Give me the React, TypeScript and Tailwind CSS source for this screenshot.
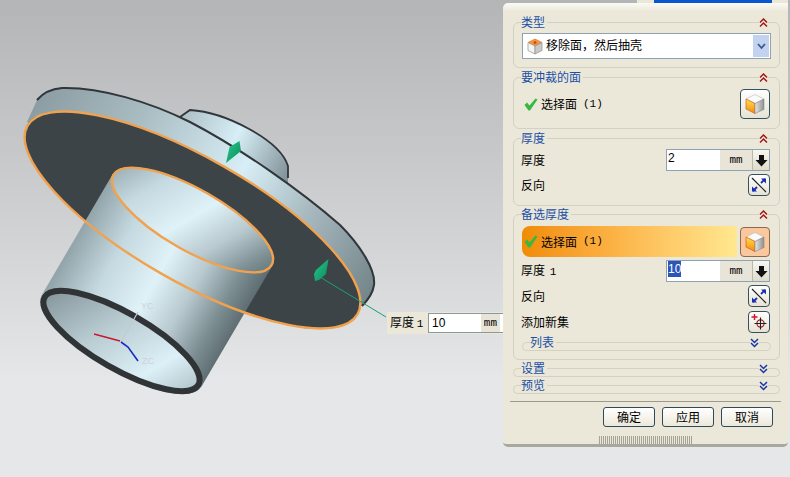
const FONT = "font-['Noto_Sans_CJK_SC',sans-serif]";

function Chevrons({ down = false, color = "#a01818" }: { down?: boolean; color?: string }) {
  const d = down ? "M1 1l3.5 3.5L8 1M1 5l3.5 3.5L8 5" : "M1 4.5L4.5 1 8 4.5M1 8.5L4.5 5 8 8.5";
  return (
    <svg width="9" height="10" viewBox="0 0 9 10" className="shrink-0 bg-[#ebe8d9]">
      <path d={d} fill="none" stroke={color} strokeWidth="1.5" />
    </svg>
  );
}

function CubeIcon({ size = 22, id }: { size?: number; id: string }) {
  return (
    <svg width={size} height={size} viewBox="0 0 22 22">
      <defs>
        <linearGradient id={id + "l"} x1="0" y1="0" x2="0" y2="1">
          <stop offset="0" stopColor="#ffe24a" />
          <stop offset="1" stopColor="#f28a10" />
        </linearGradient>
        <linearGradient id={id + "r"} x1="0" y1="0" x2="1" y2="0">
          <stop offset="0" stopColor="#e6e6e6" />
          <stop offset="1" stopColor="#8f8f8f" />
        </linearGradient>
      </defs>
      <path d="M11 1.5l9 4.5-9 4.5L2 6z" fill="#fbfbfb" stroke="#b9b9b9" strokeWidth="0.6" />
      <path d="M2 6l9 4.5v10L2 16z" fill={`url(#${id}l)`} stroke="#d2461a" strokeWidth="0.6" />
      <path d="M20 6l-9 4.5v10l9-4z" fill={`url(#${id}r)`} stroke="#8a8a8a" strokeWidth="0.6" />
    </svg>
  );
}

function SmallCube() {
  return (
    <svg width="16" height="17" viewBox="0 0 16 17">
      <path d="M8 1l7 3.5L8 8 1 4.5z" fill="#f59a3c" stroke="#c96a1c" strokeWidth="0.6" />
      <circle cx="8" cy="4.5" r="1.5" fill="#e0461a" />
      <path d="M1 4.5L8 8v8l-7-3.5z" fill="#f4f4f0" stroke="#8f8f8f" strokeWidth="0.7" />
      <path d="M15 4.5L8 8v8l7-3.5z" fill="#c9c9c6" stroke="#8f8f8f" strokeWidth="0.7" />
    </svg>
  );
}

function Check() {
  return (
    <svg width="14" height="13" viewBox="0 0 14 13" className="shrink-0">
      <path d="M0.5 7L3 4.5l2.5 3L11.5 0.5l2 1L6 12.5h-1.5z" fill="#35b844" />
    </svg>
  );
}

function IconButton({ children, big = false, active = false }: { children: React.ReactNode; big?: boolean; active?: boolean }) {
  return (
    <div
      className={
        (big ? "w-[30px] h-[30px] " : "w-[22px] h-[22px] ") +
        (active
          ? "bg-[#fbc79c] border-[#8a6a50] "
          : "bg-linear-to-b from-white to-[#e6e3d4] border-[#36505f] ") +
        "shrink-0 flex items-center justify-center rounded-[4px] border"
      }
    >
      {children}
    </div>
  );
}

function FlipIcon() {
  return (
    <svg width="18" height="18" viewBox="0 0 18 18">
      <path d="M2 2l14 14" stroke="#222" strokeWidth="1.2" />
      <path d="M11 7l4-4M3 15l4-4" stroke="#1a2fb0" strokeWidth="1.8" />
      <path d="M11 2.5h5v5zM2 10.5v5h5z" fill="#1a2fb0" />
    </svg>
  );
}

function AddIcon() {
  return (
    <svg width="18" height="18" viewBox="0 0 18 18">
      <path d="M4.5 1v6M1.5 4h6" stroke="#d01830" strokeWidth="1.4" />
      <circle cx="10.5" cy="10.5" r="3.6" fill="none" stroke="#a02028" strokeWidth="1.2" />
      <path d="M10.5 4.5v12M4.5 10.5h12" stroke="#222" strokeWidth="1.1" />
    </svg>
  );
}

function ValueInput({ value, selected = false }: { value: string; selected?: boolean }) {
  return (
    <div className="w-[104px] h-[22px] flex border border-[#8ea2b2] bg-white mr-px">
      <div className="w-[53px] pl-[1px] flex items-start text-[12px] leading-[16px] font-['Liberation_Sans',sans-serif]">
        <span className={selected ? "bg-[#2a56b8] text-white" : "text-black"}>{value}</span>
      </div>
      <div className="flex-1 bg-[#e8e5d8] flex items-center justify-center text-[11px] font-['Liberation_Mono',monospace]">mm</div>
      <div className="w-[17px] bg-linear-to-b from-[#f8f7f0] to-[#dfdccc] border-l border-[#b8b8ac] flex items-center justify-center">
        <svg width="13" height="13" viewBox="0 0 13 13">
          <path d="M4 1h5v5h3.5L6.5 12.5 0.5 6H4z" fill="#111" />
        </svg>
      </div>
    </div>
  );
}

function Header({ title, open = true }: { title: string; open?: boolean }) {
  return (
    <div className="h-0 flex items-center justify-between pl-[7px] pr-[11px]">
      <span className="-translate-y-[1px] bg-[#ebe8d9] text-[#1a4fa6] text-[12px] leading-[14px] pr-[2px]">{title}</span>
      <Chevrons down={!open} color={open ? "#a01818" : "#1a35a8"} />
    </div>
  );
}

function Section({ title, children, className, open = true }: { title: string; children?: React.ReactNode; className: string; open?: boolean }) {
  return (
    <section className={"ml-[10px] mr-[8px] border border-[#d3d1c1] " + (open ? "rounded-[6px] " : "rounded-full ") + className}>
      <Header title={title} open={open} />
      {children}
    </section>
  );
}

function Row({ label, children, className }: { label: React.ReactNode; children: React.ReactNode; className?: string }) {
  return (
    <div className={"h-[22px] flex items-center justify-between text-[12px] text-black pl-[6px] " + (className ?? "")}>
      <span>{label}</span>
      {children}
    </div>
  );
}

function SelectFace() {
  return (
    <span className="flex items-center gap-[3px] text-[12px] text-black">
      <Check />
      <span>选择面</span>
      <span className="ml-[3px] text-[11px] font-['Liberation_Mono',monospace]">(1)</span>
    </span>
  );
}

function FooterButton({ label }: { label: string }) {
  return (
    <div className="w-[52px] h-[20px] flex items-center justify-center rounded-[3px] border border-[#2f4a5c] bg-linear-to-b from-white to-[#ece9da] text-[12px] text-black">
      {label}
    </div>
  );
}

function Scene() {
  return (
    <svg width="503" height="477" viewBox="0 0 503 477" className="block">
      <defs>
        <linearGradient id="rim" gradientUnits="userSpaceOnUse" x1="40" y1="100" x2="372" y2="291">
          <stop offset="0" stopColor="#8c9ea3" />
          <stop offset="0.25" stopColor="#a9bcc2" />
          <stop offset="0.55" stopColor="#d8eef6" />
          <stop offset="0.75" stopColor="#a8bac0" />
          <stop offset="1" stopColor="#75868b" />
        </linearGradient>
        <linearGradient id="hub" gradientUnits="userSpaceOnUse" x1="175" y1="114" x2="290" y2="175">
          <stop offset="0" stopColor="#a8bbc1" />
          <stop offset="0.5" stopColor="#d8eef6" />
          <stop offset="1" stopColor="#7f9096" />
        </linearGradient>
        <linearGradient id="body" gradientUnits="userSpaceOnUse" x1="41" y1="295" x2="202" y2="386">
          <stop offset="0" stopColor="#8fa2a8" />
          <stop offset="0.25" stopColor="#c5d9e0" />
          <stop offset="0.5" stopColor="#dff2f8" />
          <stop offset="0.7" stopColor="#b8cad0" />
          <stop offset="0.88" stopColor="#7e8f94" />
          <stop offset="1" stopColor="#5f6f73" />
        </linearGradient>
        <linearGradient id="inner" gradientUnits="userSpaceOnUse" x1="41" y1="295" x2="202" y2="386">
          <stop offset="0" stopColor="#7b8c90" />
          <stop offset="0.4" stopColor="#b8cbd1" />
          <stop offset="0.72" stopColor="#dcf0f7" />
          <stop offset="1" stopColor="#a4b6bb" />
        </linearGradient>
        <linearGradient id="cone" x1="0" y1="0" x2="1" y2="1">
          <stop offset="0" stopColor="#27c98c" />
          <stop offset="1" stopColor="#0a8a5c" />
        </linearGradient>
      </defs>

      {/* hub behind the flange */}
      <path d="M180 117L190 110C225 112 280 140 288 166V190H200z" fill="url(#hub)" />
      <path d="M180 117L190 110C225 112 280 140 288 166V178" fill="none" stroke="#30363a" strokeWidth="1.8" />

      {/* flange rim */}
      <path d="M27 122L37 100C42 94 50 89 62 88C100 87 150 102 190 122C240 148 300 190 340 225C360 245 376 270 374 285C373 292 368 300 362 306L192 220z" fill="url(#rim)" />
      <path d="M37 100C42 94 50 89 62 88C100 87 150 102 190 122C240 148 300 190 340 225C360 245 376 270 374 285C373 292 368 300 362 306" fill="none" stroke="#30363a" strokeWidth="2" />

      {/* flange face */}
      <ellipse cx="192.5" cy="220" rx="190.7" ry="62.4" transform="rotate(29.7 192.5 220)" fill="#3d4448" />

      {/* lower cylinder */}
      <path d="M41.5 295.5L112.5 174.5 272.5 265.5 201.5 386.5z" fill="url(#body)" />
      <ellipse cx="192.5" cy="220" rx="92" ry="31" transform="rotate(29.7 192.5 220)" fill="url(#body)" />
      <ellipse cx="121.5" cy="341" rx="92" ry="31" transform="rotate(29.7 121.5 341)" fill="url(#body)" />
      <ellipse cx="121.5" cy="341" rx="88.5" ry="28" transform="rotate(29.7 121.5 341)" fill="url(#inner)" stroke="#303436" strokeWidth="6" />

      {/* selected edges */}
      <ellipse cx="192.5" cy="220" rx="190" ry="62" transform="rotate(29.7 192.5 220)" fill="none" stroke="#f0a24f" strokeWidth="2.4" />
      <ellipse cx="192.5" cy="220" rx="91" ry="30.5" transform="rotate(29.7 192.5 220)" fill="none" stroke="#f0a24f" strokeWidth="2.4" />

      {/* csys */}
      <path d="M121 342L138 312" stroke="#c4cbce" strokeWidth="1.2" />
      <path d="M94 334L120 341" stroke="#c81830" strokeWidth="1.6" />
      <path d="M121 342L128 347 138 361" fill="none" stroke="#1a2cc0" strokeWidth="1.6" />
      <text x="141" y="309" fontSize="9" fill="#cfd4d6" fontFamily="Liberation Sans">YC</text>
      <text x="142" y="364" fontSize="9" fill="#cfd4d6" fontFamily="Liberation Sans">ZC</text>

      {/* handles */}
      <path d="M320 277L386 317" stroke="#1aa078" strokeWidth="1" />
      <path d="M239.5 141L241 151 226 163 229.5 147z" fill="url(#cone)" />
      <path d="M328.5 259L326 274 319 280 315 281 314 274 316 270z" fill="url(#cone)" />
    </svg>
  );
}

export default function App() {
  return (
    <div className={"w-[790px] h-[477px] overflow-hidden flex bg-linear-to-b from-[#b4b5b7] via-[#d2d3d4] via-50% to-[#e6e7e9] to-80% " + FONT}>
      <div className="relative w-[503px] shrink-0">
        <Scene />
        <div className="absolute left-[387px] top-[312px] w-[116px] h-[22px] flex items-center bg-[#ebe8d9] pl-[3px] text-[12px] text-black">
          <span className="w-[38px]">
            厚度 <span className="text-[11px] font-['Liberation_Mono',monospace]">1</span>
          </span>
          <div className="flex-1 h-[20px] flex items-center justify-between bg-white border border-[#8a9a9a] border-r-0 pl-[3px] pr-[3px]">
            <span className="font-['Liberation_Sans',sans-serif]">10</span>
            <span className="bg-[#e8e5d8] px-[3px] text-[11px] leading-[18px] font-['Liberation_Mono',monospace]">mm</span>
          </div>
        </div>
      </div>

      <div className="w-[285px] shrink-0 flex flex-col">
        <div className="h-[3px] flex pl-[134px]">
          <div className="w-[17px] bg-[#ebe8d9]" />
          <div className="w-[118px] bg-[#0a55d0]" />
          <div className="flex-1 bg-[#ebe8d9]" />
        </div>
        <div className="h-[444px] rounded-tl-[5px] rounded-b-[5px] bg-linear-to-b from-[#fbfaf5] to-[#ebe8d9] to-[2%] border-b-[3px] border-[#a9a89e] pt-[19px] flex flex-col">
          <Section title="类型" className="h-[46px]">
            <div className="mx-[8px] mt-[10px] h-[26px] flex items-center border border-[#8ea2b2] bg-white pl-[4px]">
              <SmallCube />
              <span className="ml-[3px] flex-1 text-[12px] leading-[22px] -translate-y-[1px] text-black">移除面，然后抽壳</span>
              <div className="w-[16px] h-[22px] mr-px bg-[#c3d2ef] flex items-center justify-center">
                <svg width="9" height="7" viewBox="0 0 9 7">
                  <path d="M1 1l3.5 4L8 1" fill="none" stroke="#3a5a8c" strokeWidth="1.8" />
                </svg>
              </div>
            </div>
          </Section>

          <Section title="要冲裁的面" className="h-[52px] mt-[9px]">
            <div className="mt-[11px] ml-[8px] mr-[9px] h-[30px] flex items-center justify-between pl-[2px]">
              <SelectFace />
              <IconButton big>
                <CubeIcon id="c1" />
              </IconButton>
            </div>
          </Section>

          <Section title="厚度" className="h-[68px] mt-[9px]">
            <div className="pt-[10px] pl-[1px] pr-[8px] flex flex-col">
              <Row label="厚度">
                <ValueInput value="2" />
              </Row>
              <Row label="反向" className="mt-[3px] pr-px">
                <IconButton>
                  <FlipIcon />
                </IconButton>
              </Row>
            </div>
          </Section>

          <Section title="备选厚度" className="h-[146px] mt-[8px]">
            <div className="px-[8px] pt-[11px]">
              <div className="h-[31px] flex items-center gap-[3px] pr-px">
                <div className="flex-1 h-[31px] flex items-center rounded-l-[8px] pl-[2px] bg-linear-to-r from-[#f08c00] via-[#fbb040] via-40% to-[#ffe890]">
                  <SelectFace />
                </div>
                <IconButton big active>
                  <CubeIcon id="c2" />
                </IconButton>
              </div>
              <div className="-ml-[7px] mt-[3px] flex flex-col">
                <Row label={<>厚度 <span className="ml-[2px] text-[11px] font-['Liberation_Mono',monospace]">1</span></>}>
                  <ValueInput value="10" selected />
                </Row>
                <Row label="反向" className="mt-[3px] pr-px">
                  <IconButton>
                    <FlipIcon />
                  </IconButton>
                </Row>
                <Row label="添加新集" className="mt-[4px] pr-px">
                  <IconButton>
                    <AddIcon />
                  </IconButton>
                </Row>
              </div>
              <div className="mt-[9px] h-[9px] rounded-full border border-[#d3d1c1]">
                <Header title="列表" open={false} />
              </div>
            </div>
          </Section>

          <Section title="设置" open={false} className="h-[9px] mt-[8px]" />
          <Section title="预览" open={false} className="h-[9px] mt-[8px]" />

          <div className="mx-[7px] mt-[7px] border-t border-[#9c9a8c]" />

          <div className="mt-[5px] flex justify-end gap-[7px] pr-[15px]">
            <FooterButton label="确定" />
            <FooterButton label="应用" />
            <FooterButton label="取消" />
          </div>

          <div className="mt-[9px] mx-auto w-[94px] h-[8px] bg-[repeating-linear-gradient(90deg,#a5a394_0,#a5a394_1px,transparent_1px,transparent_2px)]" />
        </div>
      </div>
    </div>
  );
}
